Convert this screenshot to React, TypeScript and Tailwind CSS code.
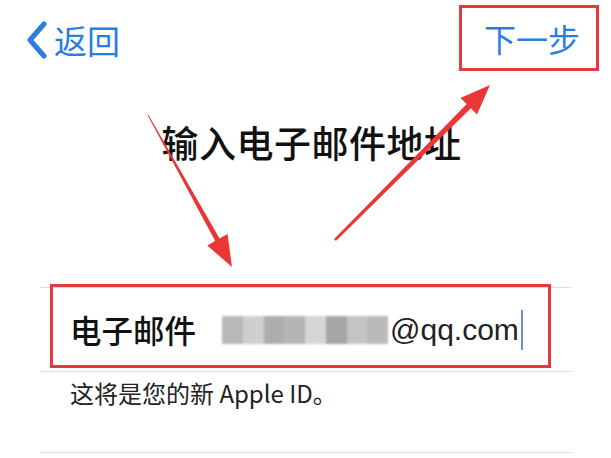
import React from "react";

const font = { fontFamily: '"Noto Sans CJK SC", "Noto Sans", sans-serif' };

const mosaic = ["#b8b8b8", "#cfcfcf", "#adadad", "#b5b5b5", "#d6d6d6", "#a6a6a6", "#c4c4c4", "#bababa"];

function Arrows() {
  return (
    <svg className="pointer-events-none absolute inset-0" width="611" height="458" viewBox="0 0 611 458">
      <polygon
        fill="#ec3535"
        points="148.4,114.8 219.6,238.6 227.5,234 232,267 207.3,245.5 215.2,241 147.6,115.2"
      />
      <polygon
        fill="#ec3535"
        points="335.9,240.9 470.9,108.3 477,114.5 490,85 460.5,98 466.8,104.1 334.1,239.1"
      />
    </svg>
  );
}

export default function App() {
  return (
    <div className="relative h-[458px] w-[611px] overflow-hidden bg-white text-black" style={font}>
      <div className="flex items-start justify-between pl-[26px] pr-[12px] pt-[5px]">
        <div className="mt-[16px] flex items-center gap-[6px] text-[#2a7de1]">
          <svg width="22" height="38" viewBox="0 0 22 38">
            <path d="M18 3 L4 19 L18 35" fill="none" stroke="#2a7de1" strokeWidth="5" strokeLinecap="round" strokeLinejoin="round" />
          </svg>
          <span className="text-[33px] leading-none">返回</span>
        </div>
        <div className="flex h-[66px] w-[140px] items-center justify-center border-[3px] border-[#e23a3e] pl-[6px] text-[32px] leading-none text-[#2a7de1]">
          下一步
        </div>
      </div>

      <h1 className="mt-[45px] pl-[12px] text-center text-[37px] font-medium leading-[53px] tracking-[0.5px] text-[#111]">
        输入电子邮件地址
      </h1>

      <div className="mx-[40px] mt-[118px] border-t border-[#dddddd]">
        <div className="relative flex h-[83px] items-center pl-[30px]">
          <span className="text-[31.5px] font-medium leading-none text-[#111]">电子邮件</span>
          <div className="ml-[26px] flex h-[28px] w-[166px] blur-[1px]">
            {mosaic.map((c, i) => (
              <div key={i} className="h-full flex-1" style={{ backgroundColor: c }} />
            ))}
          </div>
          <span className="ml-[2px] text-[30px] leading-none text-[#222]" style={{ fontFamily: '"Liberation Sans", "Noto Sans", sans-serif' }}>
            @qq.com
          </span>
          <span className="ml-[2px] h-[40px] w-[2px] bg-[#6b8de8]" />
          <div className="absolute left-[10px] top-[-4px] h-[84px] w-[501px] border-[3px] border-[#e23a3e]" />
        </div>
        <div className="border-t border-[#dddddd] pb-[42px] pl-[30px] pt-[4px] text-[24px] leading-[34px] text-[#222]">
          这将是您的新 Apple ID。
        </div>
        <div className="border-t border-[#dddddd]" />
      </div>

      <Arrows />
    </div>
  );
}
